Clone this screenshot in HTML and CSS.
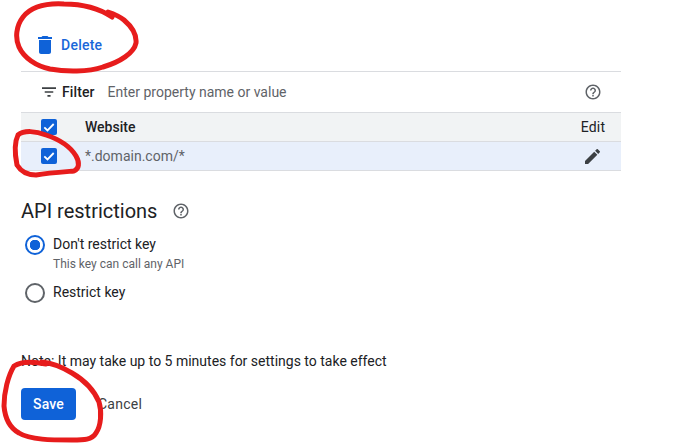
FILE: index.html
```html
<!DOCTYPE html>
<html lang="en">
<head>
    <meta charset="UTF-8">
    <title>API key restrictions</title>
    <link rel="stylesheet" href="styles.css">
</head>
<body>

<div class="page">
    <button class="delete-btn" type="button">
        <svg class="trash-icon" viewBox="5 3 14 18"><path d="M6 19c0 1.1.9 2 2 2h8c1.1 0 2-.9 2-2V7H6v12zM19 4h-3.5l-1-1h-5l-1 1H5v2h14V4z"/></svg>
        Delete
    </button>

    <div class="table">
        <div class="filter-row">
            <svg class="filter-icon" viewBox="3 6 18 12"><path d="M3 6h18v2H3zM6.500 11h11v2h-11zM10 16h4v2h-4z"/></svg>
            <span class="filter-label">Filter</span>
            <span class="filter-input">Enter property name or value</span>
            <svg class="help-icon" viewBox="0 0 24 24"><path d="M11 18h2v-2h-2v2zm1-16C6.480 2 2 6.480 2 12s4.480 10 10 10 10-4.480 10-10S17.520 2 12 2zm0 18c-4.410 0-8-3.590-8-8s3.590-8 8-8 8 3.590 8 8-3.590 8-8 8zm0-14c-2.210 0-4 1.790-4 4h2c0-1.100.9-2 2-2s2 .9 2 2c0 2-3 1.750-3 5h2c0-2.250 3-2.500 3-5 0-2.210-1.790-4-4-4z"/></svg>
        </div>
        <div class="table-row table-head">
            <span class="checkbox"><svg viewBox="0 0 16 16"><path d="M3.300 8.300l3.200 3.100 6.200-6.400"/></svg></span>
            <span class="cell-main">Website</span>
            <span class="cell-edit">Edit</span>
        </div>
        <div class="table-row table-selected">
            <span class="checkbox"><svg viewBox="0 0 16 16"><path d="M3.300 8.300l3.200 3.100 6.200-6.400"/></svg></span>
            <span class="cell-main">*.domain.com/*</span>
            <span class="cell-edit">
                <svg class="pencil-icon" viewBox="3 3 18 18"><path d="M3 17.250V21h3.750L17.810 9.940l-3.750-3.750L3 17.250zM20.710 7.040a1 1 0 0 0 0-1.410l-2.340-2.340a1 1 0 0 0-1.410 0l-1.830 1.830 3.750 3.750 1.830-1.830z"/></svg>
            </span>
        </div>
    </div>

    <div class="section-title">
        <h2>API restrictions</h2>
        <svg class="help-icon" viewBox="0 0 24 24"><path d="M11 18h2v-2h-2v2zm1-16C6.480 2 2 6.480 2 12s4.480 10 10 10 10-4.480 10-10S17.520 2 12 2zm0 18c-4.410 0-8-3.590-8-8s3.590-8 8-8 8 3.590 8 8-3.590 8-8 8zm0-14c-2.210 0-4 1.790-4 4h2c0-1.100.9-2 2-2s2 .9 2 2c0 2-3 1.750-3 5h2c0-2.250 3-2.500 3-5 0-2.210-1.790-4-4-4z"/></svg>
    </div>

    <div class="radio-group">
        <div class="radio-item">
            <span class="radio checked"></span>
            <div>
                <div class="radio-label">Don't restrict key</div>
                <div class="radio-hint">This key can call any API</div>
            </div>
        </div>
        <div class="radio-item">
            <span class="radio"></span>
            <div class="radio-label">Restrict key</div>
        </div>
    </div>

    <p class="note">Note: It may take up to 5 minutes for settings to take effect</p>

    <div class="actions">
        <button class="save-btn" type="button">Save</button>
        <button class="cancel-btn" type="button">Cancel</button>
    </div>
</div>

<!-- hand drawn red circles on top of the screenshot -->
<svg class="scribbles" viewBox="0 0 686 446">
    <path d="M112 17C100 9 82 4 64 4C46 3 31 7 23 17C16 26 15 38 19 47C24 58 36 66 50 69C66 72 88 72 103 67C120 62 134 53 136 43C137 33 131 26 124 20C119 16 114 14 108 12"/>
    <path d="M17 165C15 155 14 143 18 135C24 130 36 131 46 135C58 139 70 146 76 156C80 163 79 169 74 171C62 172 48 173 36 175C26 175 20 170 17 165"/>
    <path d="M46 364C36 362 22 361 14 366C8 376 4 392 4 406C5 418 10 428 19 433C30 440 52 440 72 440C84 440 92 440 96 433C101 426 102 412 99 402C94 390 84 380 72 373C62 367 52 363 42 362"/>
</svg>

</body>
</html>
```

FILE: styles.css
```css
* {
    box-sizing: border-box;
}

body {
    margin: 0;
    background-color: #fff;
    font-family: Roboto, "Liberation Sans", sans-serif;
    color: #202124;
    overflow: hidden;
}

button {
    font-family: inherit;
    border: none;
    background: none;
    padding: 0;
}

.page {
    width: 686px;
    height: 446px;
    padding: 33px 0 0 21px;
}

.delete-btn {
    display: flex;
    align-items: center;
    gap: 9px;
    height: 24px;
    margin-left: 17px;
    color: #1a67d9;
    font-size: 14px;
    font-weight: 500;
    letter-spacing: 0.25px;
}

.trash-icon {
    width: 14px;
    height: 18px;
    fill: #0f62d8;
}

.table {
    width: 600px;
    margin-top: 14px;
    border-top: 1px solid #dadce0;
}

.filter-row {
    display: flex;
    align-items: center;
    height: 40px;
    padding-left: 21px;
    padding-right: 19px;
}

.filter-icon {
    width: 14px;
    height: 10px;
    fill: #3c4043;
    margin-right: 6px;
}

.filter-label {
    font-size: 14px;
    font-weight: 500;
    letter-spacing: 0.1px;
    margin-right: 13px;
}

.filter-input {
    flex: 1;
    font-size: 14px;
    color: #5f6368;
}

.help-icon {
    width: 18px;
    height: 18px;
    fill: #5f6368;
}

.table-row {
    display: flex;
    align-items: center;
    height: 29px;
    border-top: 1px solid #dadce0;
    padding-left: 20px;
    font-size: 14px;
}

.table-head {
    background-color: #f1f3f4;
    font-weight: 500;
}

.table-selected {
    background-color: #e8effb;
    border-bottom: 1px solid #dadce0;
    height: 30px;
    color: #5f6368;
}

.checkbox {
    display: flex;
    width: 16px;
    height: 16px;
    border-radius: 2px;
    background-color: #0f62d8;
}

.checkbox svg {
    fill: none;
    stroke: #fff;
    stroke-width: 1.8;
}

.cell-main {
    flex: 1;
    margin-left: 28px;
}

.cell-edit {
    display: flex;
    justify-content: center;
    width: 32px;
    margin-right: 12px;
    font-weight: 400;
    letter-spacing: 0.2px;
    color: #202124;
}

.pencil-icon {
    width: 15px;
    height: 15px;
    margin-right: 1px;
    fill: #3c4043;
}

.section-title {
    display: flex;
    align-items: center;
    gap: 15px;
    margin-top: 28px;
}

.section-title h2 {
    margin: 0;
    font-size: 20px;
    font-weight: 400;
    line-height: 24px;
}

.radio-group {
    margin-top: 11px;
    margin-left: 4px;
}

.radio-item {
    display: flex;
    gap: 8px;
    margin-bottom: 10px;
}

.radio {
    width: 20px;
    height: 20px;
    border: 2px solid #5f6368;
    border-radius: 50%;
    margin-top: 1px;
}

.radio.checked {
    border-color: #0f62d8;
    background: radial-gradient(circle, #0f62d8 5px, #fff 5.500px);
}

.radio-label {
    font-size: 14px;
    line-height: 20px;
}

.radio-hint {
    margin-top: 2px;
    font-size: 12px;
    line-height: 16px;
    color: #5f6368;
}

.note {
    margin: 48px 0 0;
    font-size: 14px;
    line-height: 20px;
}

.actions {
    display: flex;
    align-items: center;
    gap: 22px;
    margin-top: 17px;
}

.save-btn {
    width: 55px;
    height: 32px;
    border-radius: 4px;
    background-color: #0f62d8;
    color: #fff;
    font-size: 14px;
    font-weight: 500;
    letter-spacing: 0.2px;
}

.cancel-btn {
    font-size: 14px;
    letter-spacing: 0.25px;
    color: #3c4043;
}

.scribbles {
    position: absolute;
    top: 0;
    left: 0;
    width: 686px;
    height: 446px;
    fill: none;
    stroke: #e71c1c;
    stroke-width: 5;
    stroke-linecap: round;
    stroke-linejoin: round;
}
```
